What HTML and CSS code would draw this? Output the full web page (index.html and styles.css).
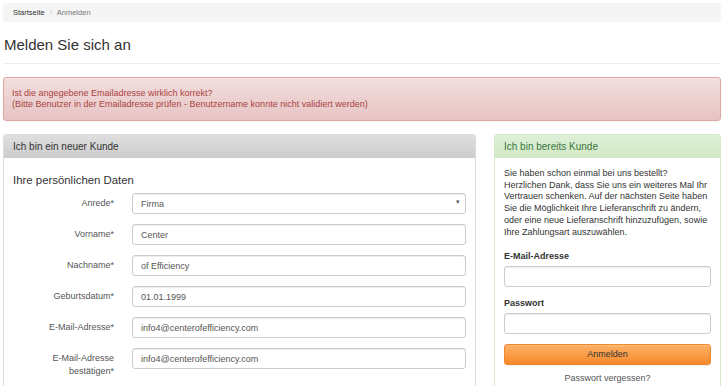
FILE: index.html
```html
<!DOCTYPE html>
<html lang="de">

<head>
    <meta charset="utf-8">
    <link rel="stylesheet" href="styles.css">
</head>

<body>
    <div class="page">
        <ol class="breadcrumb">
            <li><a href="#">Startseite</a></li>
            <li class="active">Anmelden</li>
        </ol>

        <h1 class="page-title">Melden Sie sich an</h1>
        <hr class="divider">

        <div class="alert alert-danger" role="alert">
            Ist die angegebene Emailadresse wirklich korrekt?<br>
            (Bitte Benutzer in der Emailadresse prüfen - Benutzername konnte nicht validiert werden)
        </div>

        <div class="columns">
            <div class="panel panel-default">
                <div class="panel-heading">Ich bin ein neuer Kunde</div>
                <div class="panel-body">
                    <h3 class="section-title">Ihre persönlichen Daten</h3>
                    <form class="form-horizontal">
                        <label for="salutation">Anrede*</label>
                        <div class="select-wrap">
                            <select id="salutation" class="form-control">
                                <option>Firma</option>
                                <option>Herr</option>
                                <option>Frau</option>
                            </select>
                            <span class="caret">&#9662;</span>
                        </div>

                        <label for="firstname">Vorname*</label>
                        <input id="firstname" class="form-control" type="text" value="Center">

                        <label for="lastname">Nachname*</label>
                        <input id="lastname" class="form-control" type="text" value="of Efficiency">

                        <label for="birthday">Geburtsdatum*</label>
                        <input id="birthday" class="form-control" type="text" value="01.01.1999">

                        <label for="email">E-Mail-Adresse*</label>
                        <input id="email" class="form-control" type="text" value="info4@centerofefficiency.com">

                        <label for="email2">E-Mail-Adresse<br>bestätigen*</label>
                        <input id="email2" class="form-control" type="text" value="info4@centerofefficiency.com">
                    </form>
                </div>
            </div>

            <div class="panel panel-success">
                <div class="panel-heading">Ich bin bereits Kunde</div>
                <div class="panel-body">
                    <p class="intro">Sie haben schon einmal bei uns bestellt?<br>Herzlichen Dank, dass Sie uns ein weiteres Mal Ihr Vertrauen schenken. Auf der nächsten Seite haben Sie die Möglichkeit Ihre Lieferanschrift zu ändern, oder eine neue Lieferanschrift hinzuzufügen, sowie Ihre Zahlungsart auszuwählen.</p>
                    <form class="login-form">
                        <div class="form-group">
                            <label for="login-email">E-Mail-Adresse</label>
                            <input id="login-email" class="form-control" type="text">
                        </div>
                        <div class="form-group">
                            <label for="login-password">Passwort</label>
                            <input id="login-password" class="form-control" type="password">
                        </div>
                        <button type="submit" class="btn btn-warning">Anmelden</button>
                        <a href="#" class="forgot">Passwort vergessen?</a>
                    </form>
                </div>
            </div>
        </div>
    </div>
</body>

</html>
```

FILE: styles.css
```css
body {
    font-family: "Liberation Sans", Arial, sans-serif;
    font-size: 9px;
    color: #333;
    margin: 0;
    padding: 0;
    background-color: #fff;
}

.page {
    padding: 3px 4px 0 3px;
}

/* breadcrumb */
.breadcrumb {
    list-style: none;
    margin: 0;
    padding: 0 10px;
    height: 19px;
    display: flex;
    align-items: center;
    background-color: #f5f5f5;
    border-radius: 3px;
    font-size: 7.5px;
}

.breadcrumb li + li::before {
    content: "/";
    color: #ccc;
    padding: 0 5px;
}

.breadcrumb a {
    color: #333;
    text-decoration: none;
}

.breadcrumb .active {
    color: #777;
}

.page-title {
    font-size: 15px;
    font-weight: normal;
    line-height: 17px;
    margin: 14px 0 0 1px;
    color: #333;
}

.divider {
    border: 0;
    border-top: 1px solid #eee;
    margin: 10px 0 13px;
}

/* alert */
.alert {
    padding: 10px 8px;
    line-height: 11px;
    border-radius: 3px;
    margin-bottom: 13px;
}

.alert-danger {
    color: #a94442;
    background-image: linear-gradient(to bottom, #f2dede 0, #e7c3c3 100%);
    border: 1px solid #dca7a7;
    box-shadow: inset 0 1px 0 rgba(255, 255, 255, 0.25), 0 1px 2px rgba(0, 0, 0, 0.05);
}

/* columns */
.columns {
    display: grid;
    grid-template-columns: 1fr 227px;
    column-gap: 18px;
    align-items: start;
}

.panel {
    border: 1px solid #ddd;
    border-radius: 3px;
    background-color: #fff;
    height: 270px;
}

.panel-heading {
    height: 22px;
    display: flex;
    align-items: center;
    padding: 0 9px;
    font-size: 10px;
    border-bottom: 1px solid #ccc;
    border-radius: 2px 2px 0 0;
}

.panel-default .panel-heading {
    color: #333;
    background-image: linear-gradient(to bottom, #dfdfdf 0, #cdcdcd 100%);
}

.panel-success {
    border-color: #d6e9c6;
}

.panel-success .panel-heading {
    color: #3c763d;
    background-image: linear-gradient(to bottom, #dff0d8 0, #d0e9c6 100%);
    border-bottom-color: #d6e9c6;
}

.panel-body {
    padding: 10px 9px 10px 9px;
}

.panel-default .panel-body {
    padding-top: 15px;
}

.section-title {
    font-size: 11.4px;
    font-weight: normal;
    line-height: 14px;
    margin: 0 0 6px;
    color: #333;
}

/* form controls */
.form-control {
    display: block;
    box-sizing: border-box;
    width: 100%;
    height: 21px;
    padding: 0 8px;
    font-family: inherit;
    font-size: 9px;
    color: #555;
    background-color: #fff;
    border: 1px solid #ccc;
    border-radius: 3px;
    box-shadow: inset 0 1px 1px rgba(0, 0, 0, 0.075);
    margin: 0;
}

.form-horizontal {
    display: grid;
    grid-template-columns: 101px 1fr;
    column-gap: 18px;
    row-gap: 10px;
}

.form-horizontal label {
    text-align: right;
    color: #555;
    padding-top: 4px;
    line-height: 13px;
    height: 21px;
    box-sizing: border-box;
    white-space: nowrap;
}

.select-wrap {
    position: relative;
}

.select-wrap select {
    appearance: none;
    -webkit-appearance: none;
}

.select-wrap .caret {
    position: absolute;
    right: 6px;
    top: 5px;
    font-size: 7px;
    color: #555;
    pointer-events: none;
}

/* login */
.intro {
    margin: 0 0 11.5px;
    line-height: 11.7px;
    color: #333;
}

.login-form label {
    display: block;
    font-weight: bold;
    line-height: 12px;
    margin-bottom: 4px;
    color: #333;
}

.form-group {
    margin-bottom: 10px;
}

.btn {
    display: block;
    width: 100%;
    height: 21px;
    font-family: inherit;
    font-size: 9px;
    border-radius: 3px;
    cursor: pointer;
}

.btn-warning {
    color: #333;
    background-image: linear-gradient(to bottom, #fdb266 0, #f7882b 100%);
    border: 1px solid #f0892c;
    box-shadow: inset 0 1px 0 rgba(255, 255, 255, 0.15), 0 1px 1px rgba(0, 0, 0, 0.075);
}

.forgot {
    display: block;
    text-align: center;
    margin-top: 7px;
    line-height: 12px;
    color: #555;
    text-decoration: none;
}
```
